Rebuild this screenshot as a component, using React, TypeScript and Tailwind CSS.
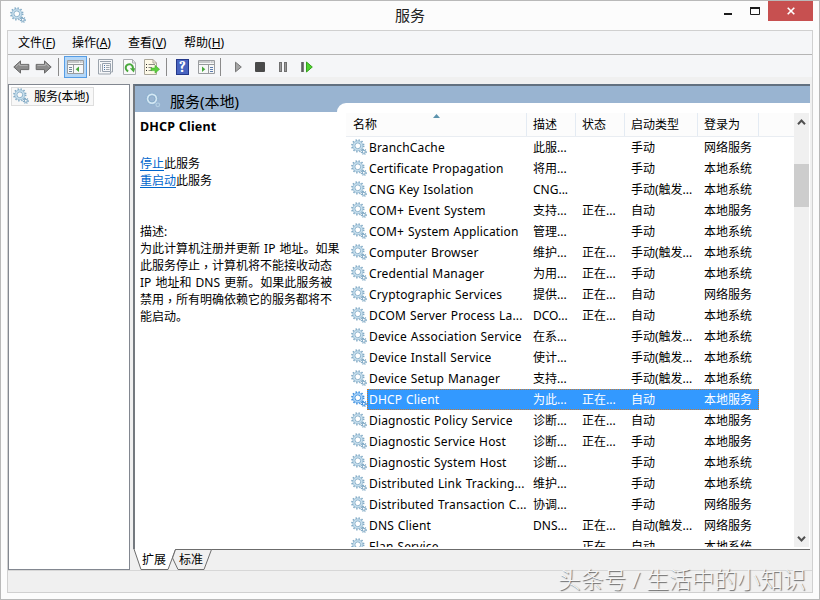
import React from 'react'

interface GearProps {
 className?: string
 active?: boolean
}

interface Service {
 name: string
 desc: string
 running?: boolean
 startup: string
 account: string
}

const services: Service[] = [
 { name: 'BranchCache', desc: '此服...', startup: '手动', account: '网络服务' },
 { name: 'Certificate Propagation', desc: '将用...', startup: '手动', account: '本地系统' },
 { name: 'CNG Key Isolation', desc: 'CNG...', startup: '手动(触发...', account: '本地系统' },
 { name: 'COM+ Event System', desc: '支持...', running: true, startup: '自动', account: '本地服务' },
 { name: 'COM+ System Application', desc: '管理...', startup: '手动', account: '本地系统' },
 { name: 'Computer Browser', desc: '维护...', running: true, startup: '手动(触发...', account: '本地系统' },
 { name: 'Credential Manager', desc: '为用...', running: true, startup: '手动', account: '本地系统' },
 { name: 'Cryptographic Services', desc: '提供...', running: true, startup: '自动', account: '网络服务' },
 { name: 'DCOM Server Process La...', desc: 'DCO...', running: true, startup: '自动', account: '本地系统' },
 { name: 'Device Association Service', desc: '在系...', startup: '手动(触发...', account: '本地系统' },
 { name: 'Device Install Service', desc: '使计...', startup: '手动(触发...', account: '本地系统' },
 { name: 'Device Setup Manager', desc: '支持...', startup: '手动(触发...', account: '本地系统' },
 { name: 'DHCP Client', desc: '为此...', running: true, startup: '自动', account: '本地服务' },
 { name: 'Diagnostic Policy Service', desc: '诊断...', running: true, startup: '自动', account: '本地服务' },
 { name: 'Diagnostic Service Host', desc: '诊断...', running: true, startup: '手动', account: '本地服务' },
 { name: 'Diagnostic System Host', desc: '诊断...', startup: '手动', account: '本地系统' },
 { name: 'Distributed Link Tracking...', desc: '维护...', startup: '手动', account: '本地系统' },
 { name: 'Distributed Transaction C...', desc: '协调...', startup: '手动', account: '网络服务' },
 { name: 'DNS Client', desc: 'DNS...', running: true, startup: '自动(触发...', account: '网络服务' },
 { name: 'Elan Service', desc: '', running: true, startup: '自动', account: '本地系统' },
]

const menus = [
 { label: '文件', key: 'F', width: 'w-[54px]' },
 { label: '操作', key: 'A', width: 'w-[56px]' },
 { label: '查看', key: 'V', width: 'w-[56px]' },
 { label: '帮助', key: 'H', width: 'w-[56px]' },
]

const description = [
 '为此计算机注册并更新 IP 地址。如果',
 '此服务停止，计算机将不能接收动态',
 'IP 地址和 DNS 更新。如果此服务被',
 '禁用，所有明确依赖它的服务都将不',
 '能启动。',
]

const GearIcon: React.FC<GearProps> = ({ className, active }) => {
 const stroke = active ? '#3c8ede' : '#83abc6'
 const inner = active ? '#a9d4fb' : '#c6dfee'
 return (
  <svg viewBox="0 0 16 16" fill="none" className={className}>
   <circle cx="6.8" cy="6.8" r="5.8" stroke={stroke} strokeWidth="1.8" strokeDasharray="1.4 1.64" />
   <circle cx="6.8" cy="6.8" r="4.1" stroke={inner} strokeWidth="2" />
   <circle cx="6.8" cy="6.8" r="5" stroke={stroke} strokeWidth=".6" />
   <circle cx="6.8" cy="6.8" r="2.9" stroke={stroke} strokeWidth=".9" />
   <circle cx="12.8" cy="12.8" r="2.4" stroke={stroke} strokeWidth="1.4" strokeDasharray="1 .88" />
   <circle cx="12.8" cy="12.8" r="1.5" stroke={stroke} strokeWidth="1.1" />
  </svg>
 )
}

// on the blue band only the bright rings of the gears stand out
const BandGearIcon: React.FC<{ className?: string }> = ({ className }) => (
 <svg viewBox="0 0 16 16" fill="none" className={className}>
  <circle cx="7" cy="6.8" r="5.9" stroke="#8eb2cf" strokeWidth="1.4" strokeDasharray="1.4 1.69" />
  <circle cx="7" cy="6.8" r="4.3" stroke="#d3e8f4" strokeWidth="1.8" />
  <circle cx="7" cy="6.8" r="3.1" stroke="#7fa6c4" strokeWidth=".7" />
  <circle cx="12.8" cy="12.8" r="1.8" stroke="#b5d0e4" strokeWidth="1.2" />
 </svg>
)

const Arrow: React.FC<{ className?: string }> = ({ className }) => (
 <svg viewBox="0 0 17 14" className={className}>
  <path d="M.8 7 7.5.9V4.4H15.8V9.6H7.5v3.5z" fill="#8c8c8c" stroke="#686868" />
  <path d="M3 6.6 6.6 3.4v2H14.6" fill="none" stroke="#b3b3b3" />
 </svg>
)

const Separator: React.FC<{ className?: string }> = ({ className }) => (
 <div className={`h-[18px] w-px shrink-0 bg-[#8b8b8b] ${className}`} />
)

const ConsoleIcon: React.FC<{ flip?: boolean }> = ({ flip }) => (
 <svg viewBox="0 0 17 14" className="h-[14px] w-[17px]">
  <path d="M.5.5h16v13H.5z" fill="#f7f8f8" stroke="#9a9da0" />
  <path d="M1 2h15M1 4.5h15" stroke="#96999c" />
  <path d="M12 2h1M14.5 2h1" stroke="#fff" />
  {flip ? (
   <>
    <path d="M10.5 5v8" stroke="#96999c" />
    <path d="M12 7.5h3M12 9.5h3M12 11.5h3" stroke="#5d7cad" />
    <path d="m4 6.5 3.3 2.7L4 12z" fill="#48a83c" />
   </>
  ) : (
   <>
    <path d="M6.5 5v8" stroke="#96999c" />
    <path d="M2 7.5h3M2 9.5h3M2 11.5h3" stroke="#73869c" />
    <path d="M12 6.5 8.7 9.2 12 12z" fill="#48a83c" />
   </>
  )}
 </svg>
)

const TitleBar = () => (
 <div className="flex h-[29px] shrink-0">
  <GearIcon className="mt-[6px] ml-[9px] h-4 w-4" />
  <div className="flex-1 pt-[4px] pl-[369px] text-[15px] leading-[20px] text-[#222]">服务</div>
  <svg viewBox="0 0 40 20" className="mr-[5px] h-5 w-10">
   <path d="M1 13h8" stroke="#1c1c1c" strokeWidth="2" />
   <path d="M27.5 7.5h9v6h-9z" fill="none" stroke="#1c1c1c" />
   <path d="M27 7h10" stroke="#1c1c1c" strokeWidth="2" />
  </svg>
  <div className="mr-[6px] flex h-5 w-[45px] items-center justify-center bg-[#c75050]">
   <svg viewBox="0 0 8 8" className="h-2 w-2">
    <path d="m.7.7 6.6 6.6M7.3.7.7 7.3" stroke="#fff" strokeWidth="1.6" />
   </svg>
  </div>
 </div>
)

const Toolbar = () => (
 <div className="flex h-[22px] shrink-0 items-center bg-[#f5f6f8] pt-[2px]">
  <Arrow className="ml-[5px] h-[14px] w-[17px]" />
  <Arrow className="ml-[5px] h-[14px] w-[17px] -scale-x-100" />
  <Separator className="ml-[6px]" />
  <div className="ml-[5px] flex h-[22px] w-[23px] shrink-0 items-center justify-center border border-[#569de5] bg-[#b5d7f7]">
   <ConsoleIcon />
  </div>
  <Separator className="ml-[2px]" />
  <svg viewBox="0 0 15 16" className="ml-[8px] h-4 w-[15px]">
   <path d="M.5.5h14v12.5h-2v2h-12z" fill="#f6f7f9" stroke="#9ba3ac" />
   <path d="M2 2.5h11M4.5 4.5h8v8h-8z" fill="none" stroke="#98a2ae" />
   <path d="M6 6.5h1M6 8.5h1M6 10.5h1" stroke="#4b74a6" />
   <path d="M8 6.5h3.5M8 8.5h3.5M8 10.5h3.5" stroke="#a0a8b0" />
   <path d="M2.5 5v8" stroke="#b7bdc4" />
  </svg>
  <svg viewBox="0 0 13 16" className="ml-[10px] h-4 w-[13px]">
   <path d="M.5.5h9L12.5 4v11.5H.5z" fill="#fafafa" stroke="#aaadb0" />
   <path d="M9.5.5V4h3" fill="none" stroke="#aaadb0" />
   <path d="M5.2 12.2A3.6 3.6 0 1 1 9.7 10" fill="none" stroke="#49a83c" strokeWidth="2" />
   <path d="M6.8 9.2h5.4L10.8 13.4z" fill="#49a83c" />
  </svg>
  <svg viewBox="0 0 17 16" className="ml-[8px] h-4 w-[17px]">
   <path d="M.5.5H9L12.5 4v11.5H.5z" fill="#fdf9e7" stroke="#aaa79a" />
   <path d="M9 .5V4h3.5" fill="none" stroke="#aaa79a" />
   <path d="M2 5.5h1M2 8.5h1M2 11.5h1" stroke="#2c2c2c" />
   <path d="M4.5 5.5H11M4.5 8.5H8M4.5 11.5H8" stroke="#8a8a83" />
   <path d="M7 9h4V6.3l4.6 4L11 14.2v-2.6H7z" fill="#5bd03e" stroke="#48af30" strokeWidth=".6" />
  </svg>
  <Separator className="ml-[5px]" />
  <div className="ml-[9px] flex h-4 w-[13px] items-center justify-center border border-[#24388a] bg-[#4864c0] font-serif text-[15px] font-bold text-white">
   ?
  </div>
  <div className="ml-[9px]">
   <ConsoleIcon flip />
  </div>
  <Separator className="ml-[5px]" />
  <svg viewBox="0 0 80 14" className="ml-[13px] h-[14px] w-20">
   <path d="M1.5 2.2 7.3 7l-5.8 4.8z" fill="#a5a5a5" stroke="#777" />
   <rect x="21" y="2" width="10" height="10" rx="1" fill="#4a4a4a" />
   <path d="M46.5 2v10M51.5 2v10" stroke="#707070" strokeWidth="3" />
   <path d="M46.5 3v8M51.5 3v8" stroke="#9a9a9a" />
   <path d="M68.5 2v10" stroke="#5e5e5e" strokeWidth="2.6" />
   <path d="M72.5 2 78.3 7l-5.8 5z" fill="#4fd32f" stroke="#35a31d" />
  </svg>
 </div>
)

const ServiceRow: React.FC<{ service: Service; selected: boolean }> = ({ service, selected }) => (
 <div className="flex h-[21px] shrink-0">
  <GearIcon active={selected} className="mt-[2px] ml-[5px] h-4 w-4 shrink-0" />
  <div
   className={
    selected
     ? 'flex w-[392px] border border-dotted border-[#c97b31] bg-[#3399ff] pl-px leading-[19px] text-white'
     : 'flex w-[392px] pt-px pl-[2px] leading-[19px]'
   }>
   <span className="w-[164px] shrink-0 tracking-[0.16px] [word-spacing:0.6px] whitespace-nowrap">{service.name}</span>
   <span className="w-[49px] shrink-0">{service.desc}</span>
   <span className="w-[49px] shrink-0">{service.running ? '正在...' : ''}</span>
   <span className="w-[73px] shrink-0 whitespace-nowrap">{service.startup}</span>
   <span className="whitespace-nowrap">{service.account}</span>
  </div>
 </div>
)

const ServiceList = () => (
 <div className="flex h-[444px] w-[473px] rounded-tl-[9px] bg-white pt-[10px] pl-[9px]">
  <div className="flex w-[448px] flex-col overflow-hidden">
   <div className="relative flex h-6 shrink-0 border-b border-[#e9edf2] bg-[#fcfcfc] leading-[23px]">
    <svg viewBox="0 0 7 4" className="absolute top-[1px] left-[87px] h-1 w-[7px]">
     <path d="M0 4 3.5 0 7 4z" fill="#5c93ad" />
    </svg>
    <div className="w-[181px] border-r border-[#e4ebf3] pl-[7px]">名称</div>
    <div className="w-[49px] border-r border-[#e4ebf3] pl-[6px]">描述</div>
    <div className="w-[49px] border-r border-[#e4ebf3] pl-[6px]">状态</div>
    <div className="w-[73px] border-r border-[#e4ebf3] pl-[6px]">启动类型</div>
    <div className="w-[61px] border-r border-[#e4ebf3] pl-[6px]">登录为</div>
   </div>
   {services.map((service) => (
    <ServiceRow key={service.name} service={service} selected={service.name === 'DHCP Client'} />
   ))}
  </div>
  <div className="flex w-[15px] flex-col items-center bg-[#f0f0f0]">
   <svg viewBox="0 0 9 6" className="mt-[6px] h-[6px] w-[9px]">
    <path d="M1 5.2 4.5 1.5 8 5.2" fill="none" stroke="#505050" strokeWidth="2" />
   </svg>
   <div className="mt-[39px] h-[43px] w-[15px] bg-[#cdcdcd]" />
   <svg viewBox="0 0 9 6" className="mt-auto mb-[5px] h-[6px] w-[9px]">
    <path d="M1 .8 4.5 4.5 8 .8" fill="none" stroke="#505050" strokeWidth="2" />
   </svg>
  </div>
 </div>
)

// the comma sits in the middle of its cell, as in the CJK TC faces
const DescriptionLine: React.FC<{ text: string }> = ({ text }) => {
 const [head, tail] = text.split('，')
 return (
  <div className="h-[17px] [word-spacing:1px]">
   {head}
   {tail && <span className="align-[-2px] font-['Noto_Sans_CJK_TC',sans-serif] leading-[0]">，</span>}
   {tail}
  </div>
 )
}

const DetailPane = () => (
 <div className="flex h-[465px] w-[677px] flex-col border-t-2 border-l-2 border-[#74797f] border-t-[#62707f] bg-white">
  <div className="flex h-[26px] shrink-0 bg-[#99b4d1]">
   <BandGearIcon className="mt-[6px] ml-[10px] h-4 w-4" />
   <div className="mt-[5px] ml-[9px] w-[167px] text-[15px] leading-[20px]">服务(本地)</div>
   <div className="mt-[17px]">
    <ServiceList />
   </div>
  </div>
  <div className="w-[203px] pl-[5px] leading-[17px] whitespace-nowrap">
   <div className="pt-[6px] text-[12.5px] font-bold tracking-[0.2px]">DHCP Client</div>
   <div className="mt-[20px]">
    <span className="text-[#0066cc] underline underline-offset-2">停止</span>此服务
   </div>
   <div>
    <span className="text-[#0066cc] underline underline-offset-2">重启动</span>此服务
   </div>
   <div className="mt-[34px]">描述:</div>
   {description.map((line) => (
    <DescriptionLine key={line} text={line} />
   ))}
  </div>
 </div>
)

const BottomTabs = () => (
 <div className="relative h-[21px] w-[677px]">
  <svg viewBox="0 0 677 21" className="absolute inset-0 h-[21px] w-[677px]">
   <path d="M42 .5H677" stroke="#6b6b6b" />
   <path d="m1 0 7 20.5h27L42 0z" fill="#fff" />
   <path d="m1 0 7 20.5h27L42.5.5" fill="none" stroke="#6d6d6d" />
   <path d="M42.5.5h36L71 20.5H45L39.5 9z" fill="#f0f0f0" stroke="#6d6d6d" />
  </svg>
  <div className="relative flex pl-[9px] leading-[21px]">
   <span className="w-[37px]">扩展</span>
   <span>标准</span>
  </div>
 </div>
)

const App = () => (
 <div className="relative flex h-[600px] w-[820px] flex-col overflow-hidden border border-[#b9b9b9] bg-[#fcfcfc] font-['Noto_Sans','Noto_Sans_CJK_SC',sans-serif] text-[12px] text-black">
  <TitleBar />
  <div className="ml-[6px] flex h-[563px] w-[806px] flex-col border border-[#d0d0d0] bg-[#f0f0f0]">
   <div className="flex h-6 shrink-0 border-b border-[#b5b5b5] bg-[#f5f6f8] pl-[10px] leading-[23px]">
    {menus.map((menu) => (
     <div key={menu.key} className={menu.width}>
      {menu.label}(<span className="underline">{menu.key}</span>)
     </div>
    ))}
   </div>
   <Toolbar />
   <div className="mt-[7px] flex h-[486px] shrink-0">
    <div className="h-[486px] w-[122px] border border-[#828790] bg-white p-[2px]">
     <div className="flex h-[19px] w-[83px] border border-[#dedede] bg-[#f8f8f8] leading-[17px]">
      <GearIcon className="ml-px h-4 w-4" />
      <span className="ml-[5px]">服务(本地)</span>
     </div>
    </div>
    <div className="ml-[3px]">
     <DetailPane />
     <BottomTabs />
    </div>
   </div>
   <div className="flex-1 border-t border-[#d7d7d7]" />
  </div>
  <div className="absolute top-[564px] left-[557px] text-[22.8px] leading-[30px] font-light whitespace-nowrap text-[#f6f6f6] [text-shadow:1px_1px_1px_#666]">
   头条号 / 生活中的小知识
  </div>
 </div>
)

export default App
